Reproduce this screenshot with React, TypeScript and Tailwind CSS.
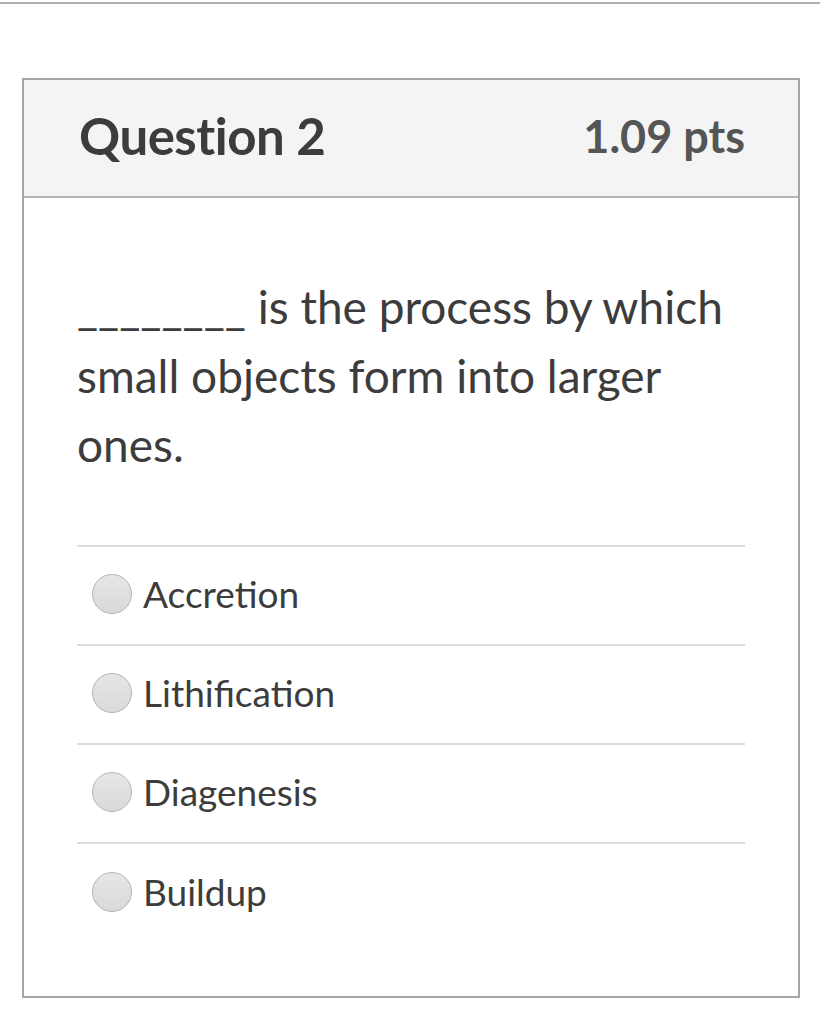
const options = ["Accretion", "Lithification", "Diagenesis", "Buildup"];

function Radio() {
  return (
    <span className="block w-[40px] h-[40px] shrink-0 rounded-full border border-[#b4b4b4] bg-gradient-to-b from-[#e6e6e6] to-[#d9d9d9]" />
  );
}

export default function App() {
  return (
    <div
      className="min-h-[1014px] bg-white text-[#3c3c3c]"
      style={{ fontFamily: "Lato, 'Open Sans', sans-serif" }}
    >
      <div className="h-[2px] mt-[2px] bg-[#b0b0b0]" />
      <div className="ml-[22px] mt-[74px] w-[778px] h-[920px] border-2 border-[#a6a6a6] flex flex-col">
        <div className="h-[118px] shrink-0 bg-[#f4f4f4] border-b-2 border-[#b4b4b4] flex items-center justify-between pl-[55px] pr-[53px] pb-[3px]">
          <h2 className="text-[51px] font-bold tracking-[-0.5px]">Question 2</h2>
          <span className="text-[45px] font-bold text-[#555555]">1.09 pts</span>
        </div>
        <div className="px-[53px] pt-[74px]">
          <p className="text-[46px] leading-[69px]">
            ________ is the process by which small objects form into larger ones.
          </p>
          <ul className="mt-[66px] border-t-2 border-[#dcdcdc]">
            {options.map((o, i) => (
              <li
                key={o}
                className={
                  "h-[99px] flex items-center gap-[11px] pl-[15px] pb-[4px] " +
                  (i < options.length - 1 ? "border-b-2 border-[#dcdcdc]" : "")
                }
              >
                <Radio />
                <span className="text-[37px]">{o}</span>
              </li>
            ))}
          </ul>
        </div>
      </div>
    </div>
  );
}
